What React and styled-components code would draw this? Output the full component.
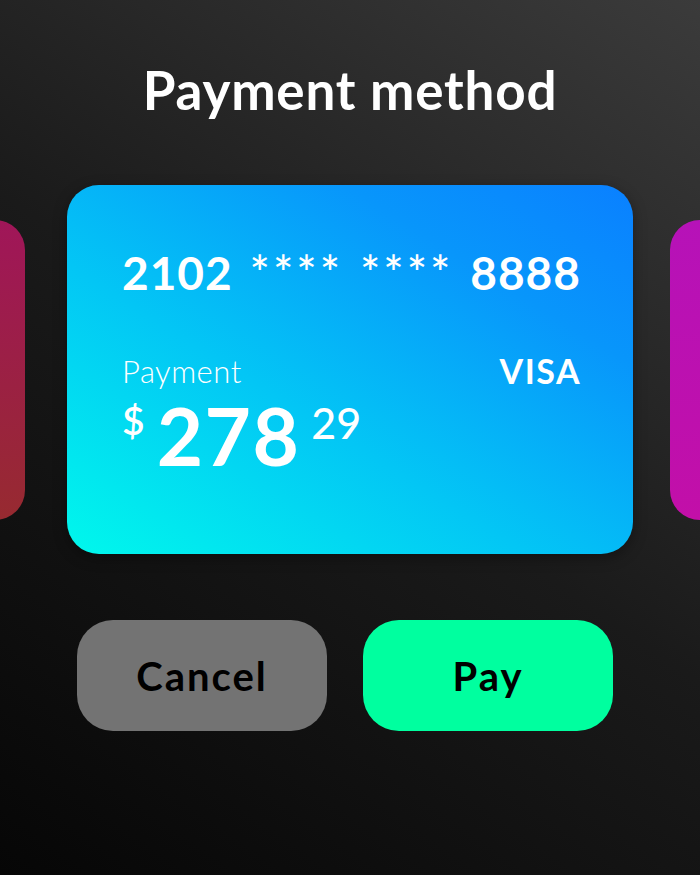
import React from 'react';
import styled, { createGlobalStyle } from 'styled-components';

const GlobalStyle = createGlobalStyle`
    html, body {
        margin: 0;
        padding: 0;
        background: #111;
    }
    body {
        font-family: Lato, "Noto Sans", sans-serif;
        -webkit-font-smoothing: antialiased;
    }
`;

const Screen = styled.div`
    width: 700px;
    height: 875px;
    overflow: hidden;
    display: flex;
    flex-direction: column;
    align-items: center;
    background: linear-gradient(35deg, #060606 0%, #1a1a1a 50%, #3b3b3b 100%);
`;

const Title = styled.h1`
    margin: 58px 0 0;
    font-size: 53px;
    font-weight: 700;
    line-height: 64px;
    letter-spacing: 0.8px;
    color: #fff;
`;

const Carousel = styled.div`
    width: 700px;
    margin-top: 63px;
    display: flex;
    justify-content: center;
    align-items: center;
`;

const SideCard = styled.div`
    flex: 0 0 ${(p) => p.$width}px;
    height: 300px;
    border-radius: 30px;
    background: ${(p) => p.$bg};
`;

const Card = styled.div`
    flex: 0 0 566px;
    height: 369px;
    margin: 0 37px 0 42px;
    box-sizing: border-box;
    padding: 58px 52px 0 55px;
    border-radius: 32px;
    color: #fff;
    background: linear-gradient(32deg, #00f8ec 0%, #03c6f5 40%, #0896fb 75%, #0a80ff 100%);
    box-shadow: 0 4px 14px rgba(0, 0, 0, 0.35);
`;

const NumberRow = styled.div`
    display: flex;
    justify-content: space-between;
    align-items: flex-start;
    font-size: 46px;
    font-weight: 700;
    line-height: 60px;
    letter-spacing: 1px;
`;

const Mask = styled.span`
    font-weight: 500;
    font-size: 48px;
    letter-spacing: 3px;
    line-height: 50px;
    margin-top: 5px;
`;

const InfoRow = styled.div`
    margin-top: 50px;
    display: flex;
    justify-content: space-between;
    align-items: flex-start;
`;

const Label = styled.div`
    font-size: 31px;
    font-weight: 300;
    line-height: 36px;
    letter-spacing: 0.5px;
`;

const Brand = styled.div`
    font-size: 34px;
    font-weight: 700;
    line-height: 36px;
    letter-spacing: 1.5px;
`;

const Amount = styled.div`
    margin-top: 12px;
    display: flex;
    align-items: flex-start;
    line-height: 1;
`;

const Currency = styled.span`
    font-size: 39px;
    font-weight: 600;
    margin-right: 12px;
`;

const Whole = styled.span`
    font-size: 80px;
    font-weight: 700;
    letter-spacing: 1.5px;
    margin-top: -6px;
`;

const Cents = styled.span`
    font-size: 43px;
    font-weight: 500;
    margin-left: 11px;
`;

const Actions = styled.div`
    margin-top: 66px;
    margin-right: 10px;
    display: flex;
    gap: 36px;
`;

const Button = styled.button`
    width: 250px;
    height: 111px;
    border: none;
    border-radius: 36px;
    font-family: inherit;
    font-size: 40px;
    font-weight: 700;
    letter-spacing: 2px;
    color: #000;
    cursor: pointer;
    background: ${(p) => (p.$primary ? '#00ff9f' : '#737373')};
`;

export default function App() {
    return (
        <>
            <GlobalStyle />
            <Screen>
                <Title>Payment method</Title>
                <Carousel>
                    <SideCard $width={300} $bg="linear-gradient(180deg, #a01659, #972a30)" />
                    <Card>
                        <NumberRow>
                            <span>2102</span>
                            <Mask>****</Mask>
                            <Mask>****</Mask>
                            <span>8888</span>
                        </NumberRow>
                        <InfoRow>
                            <div>
                                <Label>Payment</Label>
                                <Amount>
                                    <Currency>$</Currency>
                                    <Whole>278</Whole>
                                    <Cents>29</Cents>
                                </Amount>
                            </div>
                            <Brand>VISA</Brand>
                        </InfoRow>
                    </Card>
                    <SideCard $width={305} $bg="linear-gradient(180deg, #b612b8, #c20fa8)" />
                </Carousel>
                <Actions>
                    <Button>Cancel</Button>
                    <Button $primary>Pay</Button>
                </Actions>
            </Screen>
        </>
    );
}
